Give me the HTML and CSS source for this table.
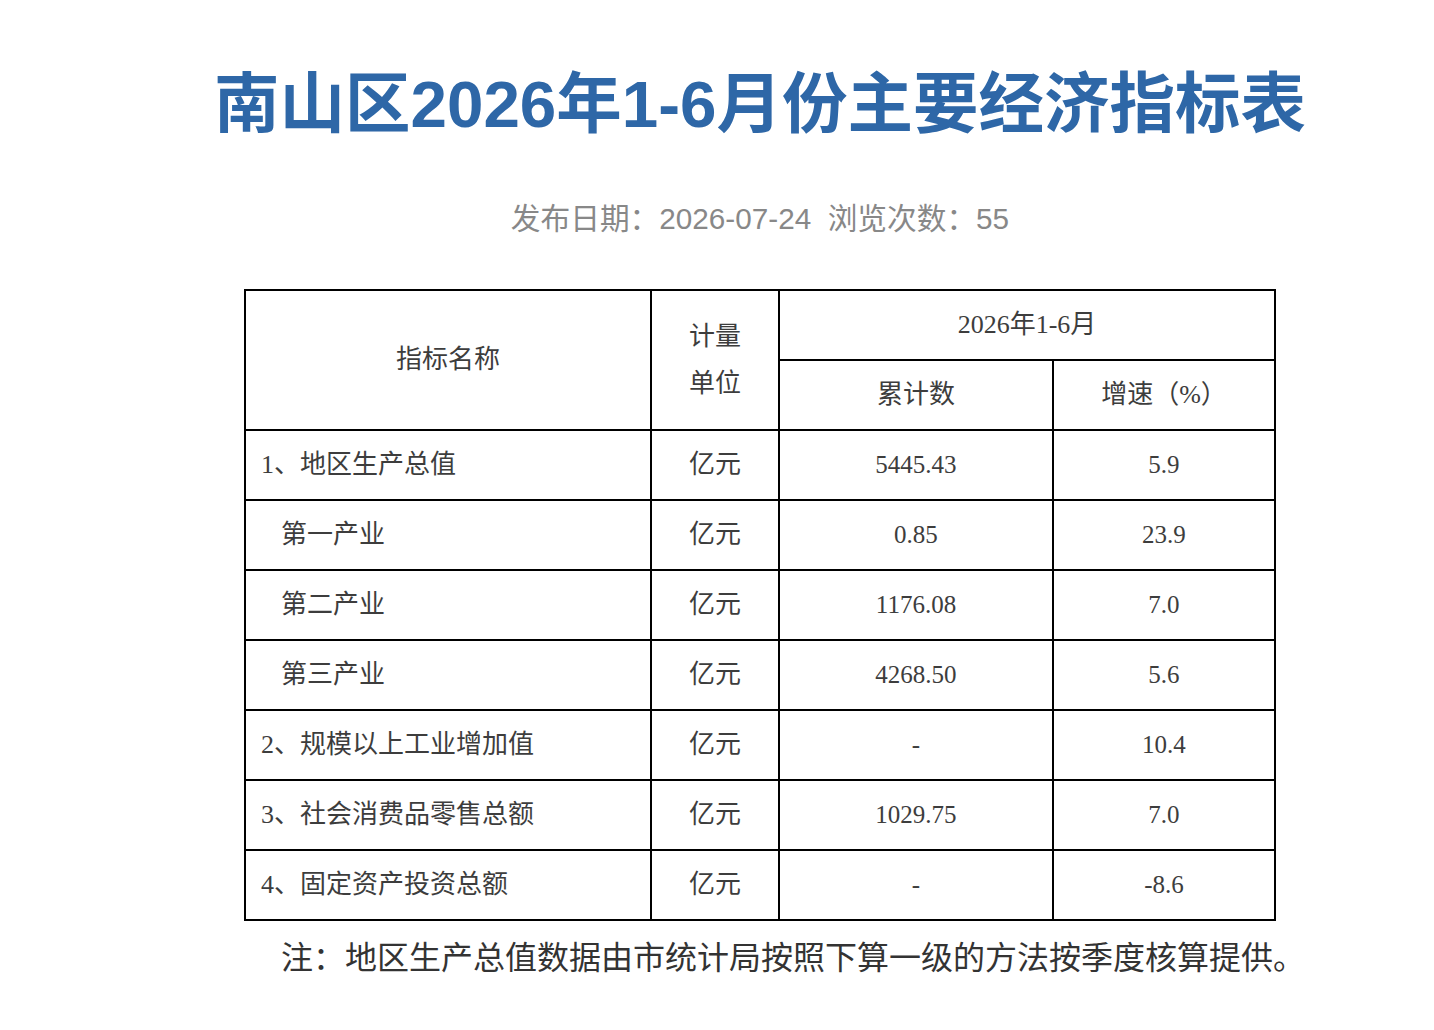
FILE: index.html
```html
<!DOCTYPE html>
<html lang="zh-CN">
<head>
<meta charset="utf-8">
<title>南山区2026年1-6月份主要经济指标表</title>
<link rel="stylesheet" href="styles.css">
</head>
<body>
<div class="page">
  <h1 class="title">南山区2026年1-6月份主要经济指标表</h1>
  <div class="meta">发布日期：2026-07-24&nbsp; 浏览次数：55</div>
  <table class="data">
    <colgroup>
      <col class="c-name">
      <col class="c-unit">
      <col class="c-sum">
      <col class="c-rate">
    </colgroup>
    <tr>
      <td rowspan="2" class="h-name">指标名称</td>
      <td rowspan="2" class="h-unit">计量<br>单位</td>
      <td colspan="2" class="h-period">2026年1-6月</td>
    </tr>
    <tr>
      <td class="h-sub">累计数</td>
      <td class="h-sub">增速（%）</td>
    </tr>
    <tr>
      <td class="name">1、地区生产总值</td>
      <td>亿元</td>
      <td class="num">5445.43</td>
      <td class="num">5.9</td>
    </tr>
    <tr>
      <td class="name sub">第一产业</td>
      <td>亿元</td>
      <td class="num">0.85</td>
      <td class="num">23.9</td>
    </tr>
    <tr>
      <td class="name sub">第二产业</td>
      <td>亿元</td>
      <td class="num">1176.08</td>
      <td class="num">7.0</td>
    </tr>
    <tr>
      <td class="name sub">第三产业</td>
      <td>亿元</td>
      <td class="num">4268.50</td>
      <td class="num">5.6</td>
    </tr>
    <tr>
      <td class="name">2、规模以上工业增加值</td>
      <td>亿元</td>
      <td class="num">-</td>
      <td class="num">10.4</td>
    </tr>
    <tr>
      <td class="name">3、社会消费品零售总额</td>
      <td>亿元</td>
      <td class="num">1029.75</td>
      <td class="num">7.0</td>
    </tr>
    <tr>
      <td class="name">4、固定资产投资总额</td>
      <td>亿元</td>
      <td class="num">-</td>
      <td class="num">-8.6</td>
    </tr>
  </table>
  <p class="note">注：地区生产总值数据由市统计局按照下算一级的方法按季度核算提供。</p>
</div>
</body>
</html>
```
FILE: styles.css
```css
html, body {
  margin: 0;
  padding: 0;
  background: #ffffff;
}

.page {
  width: 1200px;
  margin-left: 160px;
  padding-top: 65px;
  font-family: "Liberation Sans", "Noto Sans CJK SC", sans-serif;
}

.title {
  margin: 0;
  font-size: 65.5px;
  line-height: 80px;
  font-weight: bold;
  color: #2e67a7;
  text-align: center;
  white-space: nowrap;
}

.meta {
  margin-top: 54px;
  font-size: 29.7px;
  line-height: 40px;
  color: #888888;
  text-align: center;
}

.data {
  margin: 50px auto 0;
  width: 1030px;
  border-collapse: collapse;
  table-layout: fixed;
  font-family: "Liberation Serif", "Noto Sans CJK SC", serif;
  font-size: 26px;
  color: #3d3d3d;
}

.c-name { width: 406px; }
.c-unit { width: 128px; }
.c-sum { width: 274px; }
.c-rate { width: 222px; }

.data td {
  border: 2px solid #000000;
  height: 68px;
  padding: 0 4px;
  text-align: center;
  vertical-align: middle;
  line-height: 30px;
}

.data td.num {
  font-size: 25px;
}

.data td.h-unit {
  line-height: 47px;
}

.data td.name {
  text-align: left;
  padding-left: 15px;
}

.data td.sub {
  padding-left: 35px;
}

.note {
  margin: 14px 0 0;
  padding-left: 121px;
  font-family: "Noto Sans CJK SC", sans-serif;
  font-size: 32px;
  line-height: 40px;
  color: #333333;
  white-space: nowrap;
}
```
